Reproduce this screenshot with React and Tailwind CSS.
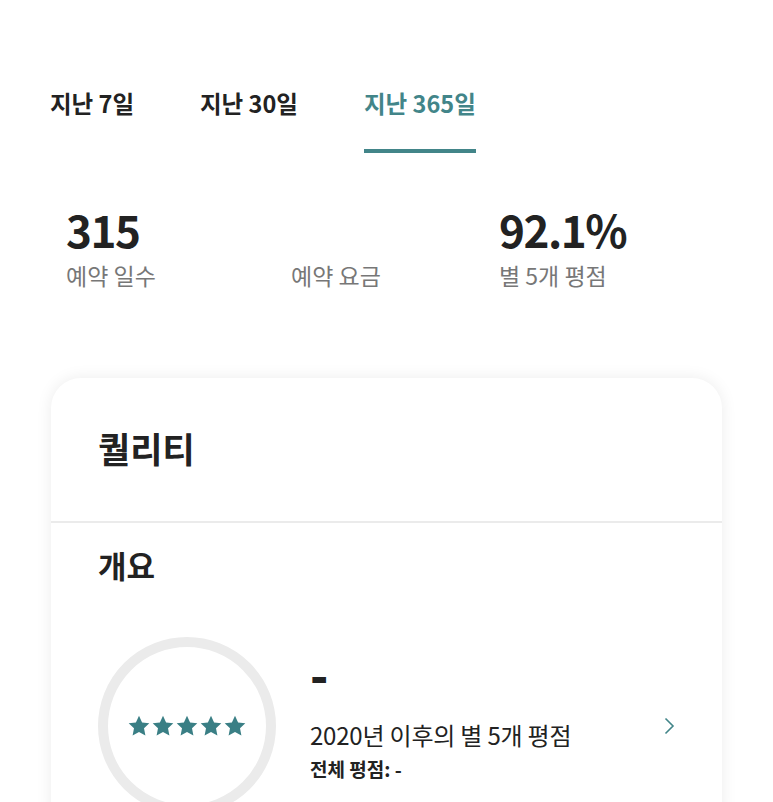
const font = { fontFamily: '"Noto Sans CJK KR", "Noto Sans", sans-serif' };

const tabs = [
  { label: "지난 7일", width: "w-[150px]" },
  { label: "지난 30일", width: "w-[164px]" },
  { label: "지난 365일", width: "", active: true },
];

const stats = [
  { value: "315", label: "예약 일수", width: "w-[225px]" },
  { value: "", label: "예약 요금", width: "w-[208px]" },
  { value: "92.1%", label: "별 5개 평점", width: "" },
];

function Star() {
  return (
    <svg viewBox="0 0 24 24" className="h-[24px] w-[24px]" fill="#3a7f85">
      <path d="M12 1.8l3.1 6.6 7.2.9-5.3 5 1.4 7.1L12 17.9l-6.4 3.5L7 14.3l-5.3-5 7.2-.9z" />
    </svg>
  );
}

export default function App() {
  return (
    <div className="min-h-[802px] w-[773px] overflow-hidden bg-white text-[#222]" style={font}>
      <div className="flex pl-[50px] pt-[85px]">
        {tabs.map((tab) => (
          <div key={tab.label} className={tab.width}>
            <div
              className={
                tab.active
                  ? "inline-block border-b-4 border-[#428589] pb-[28px] text-[23.5px] font-bold leading-[36px] text-[#428589]"
                  : "inline-block pb-[28px] text-[23.5px] font-bold leading-[36px] text-[#222]"
              }
            >
              {tab.label}
            </div>
          </div>
        ))}
      </div>

      <div className="flex pl-[66px] pt-[50px]">
        {stats.map((stat) => (
          <div key={stat.label} className={stat.width}>
            <div className="h-[52px] text-[44px] font-bold leading-[52px] tracking-[-1.5px] text-[#222]">
              {stat.value}
            </div>
            <div className="mt-[5px] text-[23px] leading-[30px] text-[#777]">{stat.label}</div>
          </div>
        ))}
      </div>

      <div className="mx-[51px] mt-[88px] rounded-t-[30px] bg-white shadow-[0_0_16px_rgba(0,0,0,0.08)]">
        <div className="flex h-[145px] items-center border-b-2 border-[#ebebeb] px-[47px] pb-[4px]">
          <h2 className="text-[35px] font-bold leading-[40px] text-[#222]">퀄리티</h2>
        </div>
        <div className="px-[47px] pt-[22px]">
          <h3 className="text-[31px] font-bold leading-[40px] text-[#222]">개요</h3>
          <div className="mt-[52px] flex items-start">
            <div className="flex h-[178px] w-[178px] shrink-0 items-center justify-center rounded-full border-[10px] border-[#ebebeb]">
              <div className="flex">
                <Star />
                <Star />
                <Star />
                <Star />
                <Star />
              </div>
            </div>
            <div className="ml-[34px] flex-1 pt-[16px]">
              <div className="h-[40px] text-[48px] font-black leading-[40px]">-</div>
              <div className="mt-[26px] text-[24px] leading-[32px] tracking-[-0.2px] text-[#222]">
                2020년 이후의 별 5개 평점
              </div>
              <div className="mt-[5px] text-[19px] font-bold leading-[26px]">전체 평점: -</div>
            </div>
            <svg viewBox="0 0 12 18" className="mt-[80px] h-[18px] w-[12px]" fill="none" stroke="#428589" strokeWidth="1.6">
              <path d="M2.5 1.5l7.5 7.5-7.5 7.5" />
            </svg>
          </div>
        </div>
      </div>
    </div>
  );
}
